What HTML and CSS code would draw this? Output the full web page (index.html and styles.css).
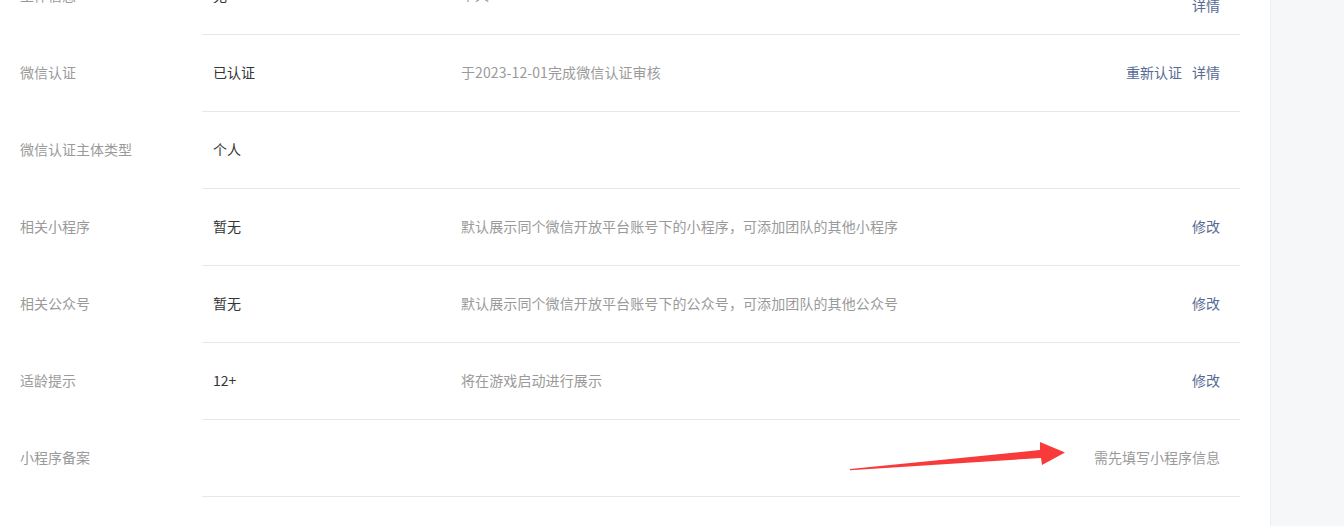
FILE: index.html
```html
<!DOCTYPE html>
<html>
	<head>
		<meta charset="UTF-8">
		<title>设置 - 基本设置</title>
		<link rel="stylesheet" href="styles.css">
	</head>
	<body>
		<div class="page">
			<div class="main">
				<div class="info-list">
					<div class="info-row">
						<div class="info-label">主体信息</div>
						<div class="info-body">
							<div class="info-value">无</div>
							<div class="info-desc">个人</div>
							<div class="info-ops two-line"><span class="op-line"><a class="op">修改</a></span><span class="op-line"><a class="op">详情</a></span></div>
						</div>
					</div>
					<div class="info-row">
						<div class="info-label">微信认证</div>
						<div class="info-body">
							<div class="info-value">已认证</div>
							<div class="info-desc">于2023-12-01完成微信认证审核</div>
							<div class="info-ops"><a class="op">重新认证</a><a class="op">详情</a></div>
						</div>
					</div>
					<div class="info-row">
						<div class="info-label">微信认证主体类型</div>
						<div class="info-body">
							<div class="info-value">个人</div>
							<div class="info-desc"></div>
							<div class="info-ops"></div>
						</div>
					</div>
					<div class="info-row">
						<div class="info-label">相关小程序</div>
						<div class="info-body">
							<div class="info-value">暂无</div>
							<div class="info-desc">默认展示同个微信开放平台账号下的小程序，可添加团队的其他小程序</div>
							<div class="info-ops"><a class="op">修改</a></div>
						</div>
					</div>
					<div class="info-row">
						<div class="info-label">相关公众号</div>
						<div class="info-body">
							<div class="info-value">暂无</div>
							<div class="info-desc">默认展示同个微信开放平台账号下的公众号，可添加团队的其他公众号</div>
							<div class="info-ops"><a class="op">修改</a></div>
						</div>
					</div>
					<div class="info-row">
						<div class="info-label">适龄提示</div>
						<div class="info-body">
							<div class="info-value">12+</div>
							<div class="info-desc">将在游戏启动进行展示</div>
							<div class="info-ops"><a class="op">修改</a></div>
						</div>
					</div>
					<div class="info-row">
						<div class="info-label">小程序备案</div>
						<div class="info-body">
							<div class="info-value"></div>
							<div class="info-desc"></div>
							<div class="info-ops"><span class="tips">需先填写小程序信息</span></div>
						</div>
					</div>
				</div>
			</div>
			<div class="side"></div>
		</div>
		<!-- 标注箭头 -->
		<svg class="mark-arrow" width="1344" height="526" viewBox="0 0 1344 526">
			<polygon points="850,469 1040,450 1040,442 1065,452.5 1042,465 1041,458 850,470.3" fill="#f93a3a"/>
		</svg>
	</body>
</html>
```

FILE: styles.css
```css
*{margin:0;padding:0;box-sizing:border-box;}
html,body{height:100%;overflow:hidden;}
body{
	background:#fff;
	font-family:"Microsoft YaHei","Noto Sans CJK SC",sans-serif;
	font-size:14px;
	color:#353535;
}
.page{
	display:flex;
	height:100%;
}
.main{
	flex:1;
	padding-right:30px;
}
.side{
	width:74px;
	background:#f6f7f9;
	border-left:1px solid #eeeff2;
}
.info-list{
	margin-top:-42px;
}
.info-row{
	display:flex;
	height:77px;
}
.info-label{
	width:202px;
	padding:0 0 3px 20px;
	display:flex;
	align-items:center;
	color:#9a9a9a;
}
.info-body{
	flex:1;
	display:flex;
	align-items:center;
	border-bottom:1px solid #e7e7eb;
	padding:0 20px 2px 11px;
}
.info-value{
	width:248px;
	color:#353535;
}
.info-desc{
	flex:1;
	color:#9a9a9a;
	letter-spacing:0.1px;
}
.info-ops{
	display:flex;
	gap:10px;
}
.info-ops.two-line{
	flex-direction:column;
	align-items:flex-end;
	gap:0;
	line-height:20px;
}
.op{
	color:#576b95;
	text-decoration:none;
	cursor:pointer;
}
.tips{
	color:#9a9a9a;
}
.mark-arrow{
	position:absolute;
	left:0;
	top:0;
	pointer-events:none;
}
```
